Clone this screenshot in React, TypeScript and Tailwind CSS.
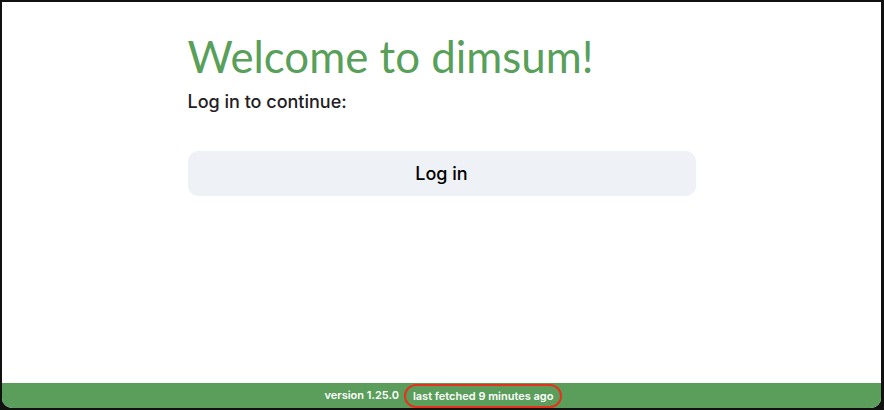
import React from "react";

const App: React.FC = () => {
  return (
    <div className="h-[410px] w-[884px] bg-[#111] pt-[2px] pb-[2px] pl-[2px] pr-[3px]">
      <div className="flex h-full flex-col overflow-hidden rounded-b-[10px] bg-white">
        <main className="flex-1">
          <div className="mx-auto w-[508px] pt-[27px]">
            <h1 className="font-['Lato',sans-serif] text-[43.8px] leading-[54px] text-[#58a05a]">
              Welcome to dimsum!
            </h1>
            <p className="mt-[8px] font-['Inter',sans-serif] text-[18px] font-medium leading-[22px] text-[#1f2024]">
              Log in to continue:
            </p>
            <button className="mt-[38px] h-[45px] w-full rounded-[10px] bg-[#eef1f5] font-['Inter',sans-serif] text-[18px] font-medium text-black">
              Log in
            </button>
          </div>
        </main>
        <footer className="flex h-[25px] items-center justify-center gap-[5px] bg-[#5b9d5a] pl-[4px] font-['Inter',sans-serif] text-[11px] font-semibold text-white">
          <span>version 1.25.0</span>
          <span className="rounded-full border-2 border-[#e8311d] px-[7px] leading-[20px]">
            last fetched 9 minutes ago
          </span>
        </footer>
      </div>
    </div>
  );
};

export default App;
